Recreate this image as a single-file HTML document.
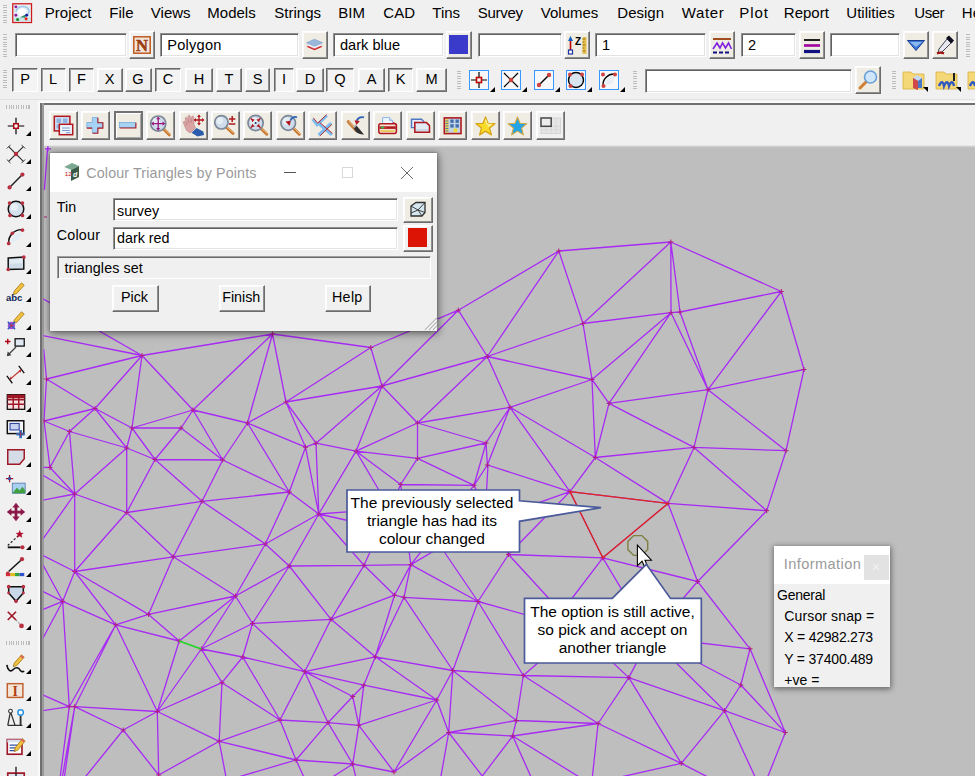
<!DOCTYPE html>
<html lang="en">
<head>
<meta charset="utf-8">
<title>Colour Triangles by Points</title>
<style>
html,body{margin:0;padding:0;}
body{width:975px;height:776px;overflow:hidden;position:relative;background:#f0f0f0;font-family:"Liberation Sans",sans-serif;font-size:15px;color:#000;}
.a{position:absolute;}
.t{position:absolute;white-space:nowrap;line-height:1;}
.mi{position:absolute;top:4px;margin-left:-.2px;font-size:15px;line-height:18px;white-space:nowrap;color:#000;}
.fld{position:absolute;box-sizing:border-box;background:#fff;border:1px solid;border-color:#909090 #fff #fff #909090;box-shadow:inset 1px 1px 0 #606060, inset -1px -1px 0 #e3e3e3;}
.btn{position:absolute;box-sizing:border-box;background:#f0f0f0;border:1px solid;border-color:#fff #6c6c6c #6c6c6c #fff;box-shadow:inset -1px -1px 0 #8e8e8e, inset 1px 1px 0 #fbfbfb;}
.btn.c{background:#efede3;}
.prs{position:absolute;box-sizing:border-box;background:#f4f4f4;border:1px solid;border-color:#696969 #fff #fff #696969;box-shadow:inset 1px 1px 0 #a0a0a0;}
.lb{position:absolute;top:68px;height:24px;font-size:14.6px;line-height:21px;text-align:center;}
.grip{position:absolute;width:4px;background:repeating-linear-gradient(to bottom,#bcbcbc 0,#bcbcbc 1px,transparent 1px,transparent 2.5px);}
.gripv{position:absolute;height:4px;background:repeating-linear-gradient(to right,#bcbcbc 0,#bcbcbc 1px,transparent 1px,transparent 2.5px);}
.tri{position:absolute;width:0;height:0;border-left:5px solid transparent;border-bottom:5px solid #000;}
svg{position:absolute;left:0;top:0;overflow:visible;}
.m{fill:none;stroke:#a82af5;stroke-width:1.3;}
.x{fill:none;stroke:#b0207a;stroke-width:1;}
</style>
</head>
<body>
<!-- menu bar -->
<div class="grip" style="left:3px;top:5px;height:18px"></div>
<svg width="20.300" height="20.300" style="left:12.300px;top:2.700px" viewBox="0 0 21 21"><rect x=".8" y=".8" width="19.400" height="19.400" fill="#e4eef6" stroke="#d01818" stroke-width="1.300"/><path d="M4 9c1-5 7-7 12-4 2 2 2 5 0 7" fill="none" stroke="#9cc4e4" stroke-width="1.600"/><path d="M6 8l5-3 4 3-2 5-5 1z" fill="#fff"/><path d="M8 15l6-3 0 3.500z" fill="#2c8c5c"/><rect x="2" y="15" width="17" height="4" fill="#b8e0e0" opacity=".7"/><circle cx="4" cy="4" r="1.500" fill="#8c1c9c"/><circle cx="4" cy="12.600" r="1.500" fill="#8c1c9c"/><circle cx="15.200" cy="12.600" r="1.500" fill="#18189c"/><circle cx="5.800" cy="17" r="1.600" fill="#1c8c2c"/><path d="M14.600 14.500l1.800 1.900-1.800 1.900-1.800-1.900z" fill="#f01818"/></svg>
<span class="mi" style="left:45px">Project</span>
<span class="mi" style="left:109.5px">File</span>
<span class="mi" style="left:151px">Views</span>
<span class="mi" style="left:207.5px">Models</span>
<span class="mi" style="left:274.5px">Strings</span>
<span class="mi" style="left:338.5px">BIM</span>
<span class="mi" style="left:383.5px">CAD</span>
<span class="mi" style="left:432.5px">Tins</span>
<span class="mi" style="left:478px;letter-spacing:-.3px">Survey</span>
<span class="mi" style="left:541px">Volumes</span>
<span class="mi" style="left:617.5px">Design</span>
<span class="mi" style="left:682px;letter-spacing:.6px">Water</span>
<span class="mi" style="left:739.5px;letter-spacing:.9px">Plot</span>
<span class="mi" style="left:784px">Report</span>
<span class="mi" style="left:846.5px">Utilities</span>
<span class="mi" style="left:914.5px;letter-spacing:-.5px">User</span>
<span class="mi" style="left:962px">Help</span>
<!-- toolbar row 1 -->
<div class="grip" style="left:3px;top:34px;height:23px"></div>
<div class="fld" style="left:15px;top:33px;width:112px;height:24px"></div>
<div class="btn" style="left:129px;top:31px;width:26px;height:28px"></div>
<svg width="18" height="18" style="left:133px;top:36px" viewBox="0 0 18 18"><rect x="0.8" y="0.8" width="16.4" height="16.4" fill="#f2e6dc" stroke="#c05a20" stroke-width="1.5"/><text x="9" y="15" text-anchor="middle" font-family="Liberation Serif,serif" font-weight="bold" font-size="16.500" fill="#9a3c10" stroke="#9a3c10" stroke-width=".5">N</text></svg>
<div class="fld" style="left:160px;top:33px;width:139px;height:24px"></div>
<span class="t" style="left:167.2px;top:38.1px;font-size:14.6px;letter-spacing:.25px">Polygon</span>
<div class="btn c" style="left:302px;top:31px;width:26px;height:28px"></div>
<svg width="19" height="16" style="left:305px;top:37px" viewBox="0 0 20 18"><path d="M1 11l9-4 9 4-9 4z" fill="#d02020"/><path d="M1 9l9-4 9 4-9 4z" fill="#f4f4f8" stroke="#c8c8d8" stroke-width=".5"/><path d="M1 6.5l9-4 9 4-9 4z" fill="#9ab8dc" stroke="#6a90c0" stroke-width=".6"/></svg>
<div class="fld" style="left:333px;top:33px;width:111px;height:24px"></div>
<span class="t" style="left:340px;top:38.1px;font-size:14.6px">dark blue</span>
<div class="btn c" style="left:446px;top:31px;width:26px;height:28px"></div>
<div class="a" style="left:449px;top:35px;width:19px;height:19px;background:#3a3acb"></div>
<div class="fld" style="left:478px;top:33px;width:84px;height:24px"></div>
<div class="btn c" style="left:564px;top:31px;width:26px;height:28px"></div>
<svg width="22" height="22" style="left:566px;top:34px" viewBox="0 0 22 22"><path d="M4.5 18V5" stroke="#c00000" stroke-width="1.6"/><path d="M2 7l2.5-5 2.500 5z" fill="#1060c0"/><rect x="2.500" y="16" width="4" height="4" fill="#fff" stroke="#2030a0" stroke-width="1.2"/><text x="9" y="11" font-family="Liberation Sans,sans-serif" font-weight="bold" font-size="10" fill="#000">Z</text><rect x="16.500" y="3" width="4" height="17" fill="#e8c050"/><path d="M16.500 5h3M16.500 8h2M16.500 11h3M16.500 14h2M16.500 17h3" stroke="#806000" stroke-width=".8"/></svg>
<div class="fld" style="left:595px;top:33px;width:111px;height:24px"></div>
<span class="t" style="left:602px;top:38.1px;font-size:14.6px">1</span>
<div class="btn c" style="left:709px;top:31px;width:26px;height:28px"></div>
<svg width="20" height="18" style="left:712px;top:37px" viewBox="0 0 20 18"><path d="M1 2h18" stroke="#a05020" stroke-width="2"/><path d="M1 12l4-6 3 5 2.500-5 3 5 3-5 3 6" fill="none" stroke="#8020e0" stroke-width="1.6"/><path d="M1 15.500h18" stroke="#101080" stroke-width="2" stroke-dasharray="4 2"/></svg>
<div class="fld" style="left:741px;top:33px;width:55px;height:24px"></div>
<span class="t" style="left:748px;top:38.1px;font-size:14.6px">2</span>
<div class="btn c" style="left:799px;top:31px;width:26px;height:28px"></div>
<svg width="18" height="18" style="left:803px;top:37px" viewBox="0 0 18 18"><path d="M1 3h16" stroke="#202020" stroke-width="2"/><path d="M1 8.500h16" stroke="#a000a0" stroke-width="2.600"/><path d="M1 14.500h16" stroke="#101080" stroke-width="3.200"/></svg>
<div class="fld" style="left:830px;top:33px;width:70px;height:24px"></div>
<div class="btn c" style="left:903px;top:31px;width:26px;height:28px"></div>
<svg width="20" height="14" style="left:906px;top:39px" viewBox="0 0 20 14"><path d="M1.500 1.500h17l-8.500 10z" fill="#3a78d8" stroke="#1a3a90" stroke-width="1"/><path d="M4 3h12l-6 5z" fill="#8ab8f0"/></svg>
<div class="btn c" style="left:932px;top:31px;width:26px;height:28px"></div>
<svg width="20" height="20" style="left:935px;top:35px" viewBox="0 0 20 20"><path d="M12 4l4 4-9 9-4 1 1-4z" fill="#e8e8f0" stroke="#404050" stroke-width="1"/><path d="M11 3l3-2.500 5 5-2.500 3z" fill="#101020"/><path d="M2 18.500c2-1 5-1 7 0" stroke="#a01010" stroke-width="2" fill="none"/></svg>
<div class="grip" style="left:966px;top:34px;height:23px"></div>
<!-- toolbar row 2 -->
<div class="grip" style="left:3px;top:70px;height:20px"></div>
<div class="prs lb" style="left:12px;width:26px">P</div>
<div class="prs lb" style="left:40.500px;width:25px">L</div>
<div class="prs lb" style="left:69px;width:25px">F</div>
<div class="btn lb" style="left:96.500px;width:26px">X</div>
<div class="btn lb" style="left:124.500px;width:27px">G</div>
<div class="prs lb" style="left:155px;width:26px">C</div>
<div class="btn lb" style="left:185px;width:28px">H</div>
<div class="btn lb" style="left:216px;width:26px">T</div>
<div class="btn lb" style="left:245px;width:25px">S</div>
<div class="prs lb" style="left:274px;width:20px">I</div>
<div class="btn lb" style="left:296px;width:28px">D</div>
<div class="prs lb" style="left:326px;width:28px">Q</div>
<div class="btn lb" style="left:358px;width:27px">A</div>
<div class="prs lb" style="left:388px;width:25px">K</div>
<div class="btn lb" style="left:416px;width:31px">M</div>
<div class="grip" style="left:457px;top:71px;height:18px"></div>
<!-- snap icons -->
<div class="a" style="left:469px;top:70px;width:20px;height:20px;box-sizing:border-box;border:1px solid #3399ff;background:#f7f7f7"></div>
<svg width="20" height="20" style="left:469px;top:70px" viewBox="0 0 20 20"><path d="M10 2v16M2 10h16" stroke="#000" stroke-width="1.2"/><rect x="7.500" y="7.500" width="5" height="5" fill="#fff" stroke="#c00000" stroke-width="1.600"/></svg>
<div class="tri" style="left:490px;top:87px"></div>
<div class="a" style="left:501px;top:70px;width:20px;height:20px;box-sizing:border-box;border:1px solid #3399ff;background:#f7f7f7"></div>
<svg width="20" height="20" style="left:501px;top:70px" viewBox="0 0 20 20"><path d="M3 3l14 14M17 3L3 17" stroke="#000" stroke-width="1.200"/><circle cx="10" cy="10" r="2.200" fill="#d04040"/></svg>
<div class="tri" style="left:522px;top:87px"></div>
<div class="a" style="left:534px;top:70px;width:20px;height:20px;box-sizing:border-box;border:1px solid #3399ff;background:#f7f7f7"></div>
<svg width="20" height="20" style="left:534px;top:70px" viewBox="0 0 20 20"><path d="M5 15L15 5" stroke="#000" stroke-width="1.400"/><circle cx="5" cy="15" r="2.200" fill="#d04040"/><circle cx="15" cy="5" r="2.200" fill="#d04040"/></svg>
<div class="tri" style="left:555px;top:87px"></div>
<div class="a" style="left:566px;top:70px;width:20px;height:20px;box-sizing:border-box;border:1px solid #3399ff;background:#f7f7f7"></div>
<svg width="20" height="20" style="left:566px;top:70px" viewBox="0 0 20 20"><circle cx="10" cy="10" r="7.500" fill="#d8e4f0" stroke="#000" stroke-width="1.400"/><circle cx="4" cy="4.500" r="2" fill="#d04040"/><circle cx="16" cy="4.500" r="2" fill="#d04040"/><circle cx="4.500" cy="16" r="2" fill="#d04040"/></svg>
<div class="tri" style="left:587px;top:87px"></div>
<div class="a" style="left:599px;top:70px;width:20px;height:20px;box-sizing:border-box;border:1px solid #3399ff;background:#f7f7f7"></div>
<svg width="20" height="20" style="left:599px;top:70px" viewBox="0 0 20 20"><path d="M4 16A11 11 0 0 1 16 4" fill="none" stroke="#000" stroke-width="1.400"/><path d="M6 16A9 9 0 0 1 16 6l-3 8z" fill="#e8eef4"/><circle cx="4" cy="4.500" r="2" fill="#d04040"/><circle cx="16" cy="4.500" r="2" fill="#d04040"/><circle cx="4.500" cy="16" r="2" fill="#d04040"/></svg>
<div class="tri" style="left:620px;top:87px"></div>
<div class="grip" style="left:633px;top:71px;height:18px"></div>
<div class="fld" style="left:645px;top:68.500px;width:207px;height:24.500px"></div>
<div class="btn c" style="left:855px;top:66px;width:26px;height:28px"></div>
<svg width="22" height="22" style="left:857px;top:69px" viewBox="0 0 22 22"><path d="M3 19l7-7" stroke="#d08030" stroke-width="3" stroke-linecap="round"/><circle cx="13.500" cy="8" r="6" fill="#cfe6fa" stroke="#6aa0d8" stroke-width="1.600"/></svg>
<div class="grip" style="left:892px;top:71px;height:18px"></div>
<svg width="26" height="24" style="left:902px;top:68px" viewBox="0 0 26 24"><path d="M1 4h8l2 2h11v15H1z" fill="#f4d878" stroke="#d8b040" stroke-width=".8"/><rect x="11" y="10" width="9" height="10" fill="#4878c8"/><path d="M11 10l4-3 5 3-4 3z" fill="#c8d8f0"/><path d="M11 10v10l5 2V13z" fill="#d04848"/><path d="M21 19h5v5z" fill="#000"/></svg>
<svg width="26" height="24" style="left:935px;top:68px" viewBox="0 0 26 24"><path d="M1 4h8l2 2h11v15H1z" fill="#f4d878" stroke="#d8b040" stroke-width=".8"/><path d="M4 18c2-5 4-5 5 0 2-5 4-5 5 0 2-5 4-5 5 0" fill="none" stroke="#3058c0" stroke-width="2.400"/><path d="M19 5v8" stroke="#202020" stroke-width="2"/><path d="M21 19h5v5z" fill="#000"/></svg>
<svg width="10" height="24" style="left:967px;top:68px" viewBox="0 0 10 24"><path d="M1 4h8v17H1z" fill="#f4d878" stroke="#d8b040" stroke-width=".8"/><path d="M3 18c2-5 4-5 5 0" fill="none" stroke="#3058c0" stroke-width="2.400"/></svg>
<!-- view frame + toolbar -->
<div class="a" style="left:0;top:99px;width:975px;height:1px;background:#e2e2e2"></div>
<div class="a" style="left:38px;top:101px;width:937px;height:2px;background:#fafafa"></div>
<div class="a" style="left:38px;top:101px;width:2px;height:675px;background:#fafafa"></div>
<div class="a" style="left:40px;top:103px;width:935px;height:2px;background:#707070"></div>
<div class="a" style="left:40px;top:103px;width:3.500px;height:673px;background:linear-gradient(to right,#707070 0,#707070 2.400px,#9a9a9a 2.400px)"></div>
<div class="btn c" style="left:48.5px;top:110.500px;width:29px;height:29.500px"></div>
<svg width="29" height="30" style="left:48.5px;top:110.500px" viewBox="0 0 29 30"><rect x="5.300" y="5.300" width="15.600" height="14.600" fill="#cfe0f4" stroke="#b01820" stroke-width="1.500"/><rect x="7.500" y="7.500" width="4.500" height="4.500" fill="#8fb4e0"/><rect x="14" y="7.500" width="4.500" height="4.500" fill="#8fb4e0"/><rect x="7.500" y="13.500" width="3" height="4" fill="#8fb4e0"/><rect x="10.300" y="13.300" width="13.400" height="10.400" fill="#eef4fc" stroke="#b01820" stroke-width="1.500"/><path d="M13 17h8M13 19.500h8M17 21.700h4.500" stroke="#7c9cd0" stroke-width="1"/></svg>
<div class="btn c" style="left:81.0px;top:110.500px;width:29px;height:29.500px"></div>
<svg width="29" height="30" style="left:81.0px;top:110.500px" viewBox="0 0 29 30"><path d="M11.300 6.500h5.300v5h5v5.300h-5v5.200h-5.300v-5.200h-5.500v-5.300h5.500z" fill="#a6d2f4" stroke="#5c9cd8" stroke-width=".6"/><path d="M16.900 6.800v4.900h5v5.400h-5v5.200h-5.300M5.800 17.100h5.300" fill="none" stroke="#b01820" stroke-width="1.100"/></svg>
<div class="btn c" style="left:113.5px;top:110.500px;width:29px;height:29.500px;border:2px solid #727272;box-shadow:inset 1px 1px 0 #fff, inset -1px -1px 0 #a8a8a8"></div>
<svg width="29" height="30" style="left:113.5px;top:110.500px" viewBox="0 0 29 30"><rect x="5.600" y="11.500" width="16" height="5.200" fill="#a6d2f4" stroke="#5c9cd8" stroke-width=".6"/><path d="M21.900 11.700v5.300H5.800" fill="none" stroke="#b01820" stroke-width="1.100"/></svg>
<div class="btn c" style="left:146.0px;top:110.500px;width:29px;height:29.500px"></div>
<svg width="29" height="30" style="left:146.0px;top:110.500px" viewBox="0 0 29 30"><path d="M17.52 17.919999999999998L23.3 23.8" stroke="#c87830" stroke-width="3" stroke-linecap="round"/><path d="M18.02 17.619999999999997L23.6 23.2" stroke="#f0c080" stroke-width="1" stroke-linecap="round"/><circle cx="12.2" cy="12.6" r="7.6" fill="#cfdcec" stroke="#7c8898" stroke-width="1.700"/><circle cx="10.299999999999999" cy="10.7" r="3.8" fill="#eef4fa" opacity=".7"/><path d="M12.200 7v11.200M6.600 12.600h11.200" stroke="#98187c" stroke-width="1.300"/><path d="M12.200 5.500l2.100 2.700h-4.200zM12.200 19.700l2.100-2.700h-4.200zM5.100 12.600l2.700-2.100v4.200zM19.300 12.600l-2.700-2.100v4.200z" fill="#98187c"/></svg>
<div class="btn c" style="left:178.5px;top:110.500px;width:29px;height:29.500px"></div>
<svg width="29" height="30" style="left:178.5px;top:110.500px" viewBox="0 0 29 30"><path d="M4.500 12c-.5-2 1.200-2.600 2-1l1.600 3-1.800-6c-.5-1.800 1.400-2.400 2-.8l1.700 5-1-6.400c-.2-1.700 1.800-2 2.200-.3l1.200 6.200.2-5.400c0-1.600 2-1.600 2.100 0l.3 7.500 1.500 3-5.500 5.200-3.500-2.700z" fill="#dba4a4" stroke="#b87c80" stroke-width=".6"/><path d="M12.500 21.800l5-4.800 6.800 3.500.7 3.500-6.500 1.500z" fill="#2c5cac"/><path d="M20 4.500v9M15.500 9h9" stroke="#b01820" stroke-width="1.300"/><path d="M20 3.600l1.900 2.400h-3.800zM20 14.400l1.900-2.400h-3.800zM14.600 9l2.400-1.900v3.800zM25.400 9l-2.400-1.900v3.800z" fill="#b01820"/></svg>
<div class="btn c" style="left:211.0px;top:110.500px;width:29px;height:29.500px"></div>
<svg width="29" height="30" style="left:211.0px;top:110.500px" viewBox="0 0 29 30"><path d="M15.09 15.99L22 22.4" stroke="#c87830" stroke-width="3" stroke-linecap="round"/><path d="M15.59 15.69L22.3 21.799999999999997" stroke="#f0c080" stroke-width="1" stroke-linecap="round"/><circle cx="10.4" cy="11.3" r="6.7" fill="#cfdcec" stroke="#7c8898" stroke-width="1.700"/><circle cx="8.725" cy="9.625" r="3.35" fill="#eef4fa" opacity=".7"/><path d="M21.200 5v6M18 8h6.400M18 13h6.400" stroke="#b01820" stroke-width="1.500"/></svg>
<div class="btn c" style="left:243.0px;top:110.500px;width:29px;height:29.500px"></div>
<svg width="29" height="30" style="left:243.0px;top:110.500px" viewBox="0 0 29 30"><path d="M17.919999999999998 17.32L23.8 23.2" stroke="#c87830" stroke-width="3" stroke-linecap="round"/><path d="M18.419999999999998 17.02L24.1 22.599999999999998" stroke="#f0c080" stroke-width="1" stroke-linecap="round"/><circle cx="12.6" cy="12" r="7.6" fill="#cfdcec" stroke="#7c8898" stroke-width="1.700"/><circle cx="10.7" cy="10.1" r="3.8" fill="#eef4fa" opacity=".7"/><g fill="#b01820"><path d="M8.500 8l3.300.6-2.700 2.700zM16.700 8l-.6 3.300-2.700-2.700zM8.500 16l.6-3.300 2.700 2.700zM16.700 16l-3.300-.6 2.700-2.700z"/></g><path d="M7.700 7.200l2.500 2.500M17.500 7.200L15 9.700M7.700 16.800l2.500-2.500M17.500 16.800L15 14.300" stroke="#b01820" stroke-width="1.300"/><circle cx="12.600" cy="12" r="1" fill="#203060"/></svg>
<div class="btn c" style="left:275.5px;top:110.500px;width:29px;height:29.500px"></div>
<svg width="29" height="30" style="left:275.5px;top:110.500px" viewBox="0 0 29 30"><path d="M17.31 17.11L23.3 23.2" stroke="#c87830" stroke-width="3" stroke-linecap="round"/><path d="M17.81 16.81L23.6 22.599999999999998" stroke="#f0c080" stroke-width="1" stroke-linecap="round"/><circle cx="12.2" cy="12" r="7.3" fill="#cfdcec" stroke="#7c8898" stroke-width="1.700"/><circle cx="10.375" cy="10.175" r="3.65" fill="#eef4fa" opacity=".7"/><path d="M9.500 10.500l5.500-1-1.500 5.500z" fill="#b01820"/><path d="M14.500 9.500c1-3 4-4.500 6.500-3" fill="none" stroke="#2c64b8" stroke-width="1.800"/></svg>
<div class="btn c" style="left:308.0px;top:110.500px;width:29px;height:29.500px"></div>
<svg width="29" height="30" style="left:308.0px;top:110.500px" viewBox="0 0 29 30"><path d="M4.500 8.200l4.600 5.800 10-9.400" fill="none" stroke="#7cbcf0" stroke-width="2.600"/><path d="M5.300 6.800l4.300 5.400 9-8.600" fill="none" stroke="#b01820" stroke-width=".9"/><path d="M10.500 12.600l13.300 11.400M23.100 12L10.500 24" stroke="#7cbcf0" stroke-width="2.800"/><path d="M11.600 11.400l12.800 11M24 13.300L11.800 25" stroke="#b01820" stroke-width=".9" fill="none"/></svg>
<div class="btn c" style="left:340.5px;top:110.500px;width:29px;height:29.500px"></div>
<svg width="29" height="30" style="left:340.5px;top:110.500px" viewBox="0 0 29 30"><path d="M7.300 10.600l7.400 8.400" stroke="#c88040" stroke-width="3.200" stroke-linecap="round"/><path d="M8 10.200l6.800 7.800" stroke="#f0c890" stroke-width=".9"/><path d="M12.800 17.300l2.900-2.500 7.300 8.700c-3 .3-6-.8-8-2.500z" fill="#303030"/><path d="M13 16.200l2.300-2" stroke="#a0a8b0" stroke-width="1.600"/><path d="M23 6.400c-3-.8-6 .6-7.300 3.200" fill="none" stroke="#2c64b8" stroke-width="1.900"/><path d="M13.600 9.200l5.200.7-3.400 4z" fill="#b01820"/></svg>
<div class="btn c" style="left:373.0px;top:110.500px;width:29px;height:29.500px"></div>
<svg width="29" height="30" style="left:373.0px;top:110.500px" viewBox="0 0 29 30"><path d="M9.600 6.600h7l3 3v5h-10z" fill="#eef6fe" stroke="#8cb4e4" stroke-width="1"/><path d="M16.600 6.600v3h3" fill="#c0d8f4" stroke="#8cb4e4" stroke-width=".8"/><rect x="5.800" y="12.800" width="17.600" height="9.600" rx="1.800" fill="#f4e4d4" stroke="#b01820" stroke-width="1.500"/><path d="M20 11.500l3.400 1.800v6" fill="none" stroke="#b01820" stroke-width="1.300"/><rect x="6.500" y="15.300" width="16.200" height="2.600" fill="#b01820"/><rect x="7.500" y="19.300" width="14" height="1.500" fill="#e8c040"/><rect x="7.800" y="15.700" width="3.400" height="1.700" fill="#30c050"/><rect x="11.800" y="15.900" width="1.500" height="1.300" fill="#e04040"/></svg>
<div class="btn c" style="left:405.5px;top:110.500px;width:29px;height:29.500px"></div>
<svg width="29" height="30" style="left:405.5px;top:110.500px" viewBox="0 0 29 30"><path d="M5.500 8.300h10l2.300 2.300v6H5.500z" fill="#e4ecf8" stroke="#4c78c4" stroke-width="1.400"/><path d="M8.800 11.600h11.700l3 3v6.700H8.800z" fill="#ccd8e4" stroke="#b01820" stroke-width="1.500"/><path d="M10 12.800h10l2.300 2.300v3H10z" fill="#eef2f6" opacity=".7"/></svg>
<div class="btn c" style="left:438.0px;top:110.500px;width:29px;height:29.500px"></div>
<svg width="29" height="30" style="left:438.0px;top:110.500px" viewBox="0 0 29 30"><rect x="6.300" y="6.900" width="16.700" height="15.700" fill="#c4d4e4" stroke="#b01820" stroke-width="1.600"/><rect x="7.400" y="8" width="3" height="13.500" fill="#e8d050"/><path d="M7.400 10h3M7.400 12.500h3M7.400 15h3M7.400 17.500h3M7.400 20h3" stroke="#5070a0" stroke-width=".9"/><g fill="#4470b0"><rect x="12.300" y="8.500" width="3.400" height="3.400"/><rect x="17.500" y="8.500" width="3.400" height="3.400"/><rect x="12.300" y="13.200" width="3.400" height="3.400"/><rect x="17.500" y="13.200" width="3.400" height="3.400"/></g><rect x="15.600" y="17.600" width="3.600" height="3.600" fill="#f0dc30"/></svg>
<div class="btn c" style="left:470.5px;top:110.500px;width:29px;height:29.500px"></div>
<svg width="29" height="30" style="left:470.5px;top:110.500px" viewBox="0 0 29 30"><path d="M14.500 6l2.500 6.300 6.900.4-5.300 4.400 1.800 6.800-5.900-3.800-5.900 3.800 1.800-6.800-5.300-4.400 6.900-.4z" fill="#f8dc28" stroke="#d8a418" stroke-width="1.300" stroke-linejoin="round"/><path d="M14.500 8.500l1.600 4.600 4 .2-3.500 2.700" fill="none" stroke="#fdf4a0" stroke-width="1.200"/></svg>
<div class="btn c" style="left:503.0px;top:110.500px;width:29px;height:29.500px"></div>
<svg width="29" height="30" style="left:503.0px;top:110.500px" viewBox="0 0 29 30"><path d="M14.500 6l2.500 6.300 6.900.4-5.300 4.400 1.800 6.800-5.900-3.800-5.900 3.800 1.800-6.800-5.300-4.400 6.900-.4z" fill="#22a4e6" stroke="#d8a840" stroke-width="1.100" stroke-linejoin="round"/></svg>
<div class="btn" style="left:535.5px;top:110.500px;width:29px;height:29.500px"></div>
<svg width="29" height="30" style="left:535.5px;top:110.500px" viewBox="0 0 29 30"><rect x="5" y="7" width="19.500" height="15.600" fill="#e6e6e6" stroke="#d0d0d0" stroke-width=".8"/><path d="M15.200 7v15.600M5 15.300h19.500M19.800 7v15.600M5 19h19.500M10 15.300v7.300" stroke="#d4d4d4" stroke-width=".8"/><rect x="5" y="7" width="10.200" height="8.300" fill="#ececec" stroke="#484848" stroke-width="1.500"/></svg>
<!-- left tool bar -->
<div class="gripv" style="left:6px;top:104.5px;width:24px"></div>
<div class="gripv" style="left:6px;top:641px;width:24px"></div>
<svg width="22" height="22" style="left:4.5px;top:115px" viewBox="0 0 24 24"><path d="M12 3v18M3 12h18" stroke="#000" stroke-width="1.300"/><rect x="9.500" y="9.500" width="5" height="5" fill="#fff" stroke="#b00010" stroke-width="1.600"/></svg>
<div class="tri" style="left:26px;top:131px"></div>
<svg width="22" height="22" style="left:4.5px;top:143px" viewBox="0 0 24 24"><path d="M4 4l16 16M20 4L4 20" stroke="#303030" stroke-width="1.300"/><path d="M2 6l4-4M18 22l4-4M18 2l4 4M2 18l4 4" stroke="#303030" stroke-width="1"/><circle cx="12" cy="12" r="2.4" fill="#b83040"/></svg>
<div class="tri" style="left:26px;top:159px"></div>
<svg width="22" height="22" style="left:4.5px;top:170px" viewBox="0 0 24 24"><path d="M5 19L19 5" stroke="#202020" stroke-width="1.600"/><circle cx="5" cy="19" r="2.3" fill="#b83040"/><circle cx="19" cy="5" r="2.3" fill="#b83040"/></svg>
<div class="tri" style="left:26px;top:186px"></div>
<svg width="22" height="22" style="left:4.5px;top:198px" viewBox="0 0 24 24"><circle cx="12" cy="12" r="8.500" fill="#d4e0ec" stroke="#101010" stroke-width="1.600"/><circle cx="10" cy="10" r="4" fill="#f0f4f8" opacity=".7"/><circle cx="5" cy="5.5" r="2" fill="#b83040"/><circle cx="19" cy="5.5" r="2" fill="#b83040"/><circle cx="5.5" cy="19" r="2" fill="#b83040"/><circle cx="19" cy="19" r="2" fill="#b83040"/></svg>
<div class="tri" style="left:26px;top:214px"></div>
<svg width="22" height="22" style="left:4.5px;top:226px" viewBox="0 0 24 24"><path d="M4 19A14 14 0 0 1 19 4" fill="none" stroke="#101010" stroke-width="1.600"/><path d="M7 19A12 12 0 0 1 19 7l-4 8z" fill="#e4ecf4"/><circle cx="4" cy="19" r="2" fill="#b83040"/><circle cx="8" cy="8" r="2" fill="#b83040"/><circle cx="19" cy="4.5" r="2" fill="#b83040"/></svg>
<div class="tri" style="left:26px;top:242px"></div>
<svg width="22" height="22" style="left:4.5px;top:253px" viewBox="0 0 24 24"><path d="M3.500 5.500l17-1v13l-17 .5z" fill="#cfdce8" stroke="#101010" stroke-width="1.600"/><path d="M5 7l14-.8v5l-14 .4z" fill="#eef4f8" opacity=".6"/><circle cx="3.500" cy="18" r="2" fill="#b83040"/><circle cx="20.500" cy="4.500" r="2" fill="#b83040"/></svg>
<div class="tri" style="left:26px;top:269px"></div>
<svg width="22" height="22" style="left:4.5px;top:281px" viewBox="0 0 24 24"><path d="M10 11l8-9 3 2.500-8 9-4 1.500z" fill="#f0c040" stroke="#a07010" stroke-width=".8"/><text x="1" y="22" font-family="Liberation Sans,sans-serif" font-size="10.500" font-weight="bold" fill="#102858">abc</text></svg>
<div class="tri" style="left:26px;top:297px"></div>
<svg width="22" height="22" style="left:4.5px;top:309px" viewBox="0 0 24 24"><path d="M10 12l8-9 3 2.500-8 9-4 1.500z" fill="#f0c040" stroke="#a07010" stroke-width=".8"/><circle cx="7" cy="18" r="4" fill="#a050d0"/><path d="M3 14l8 8M11 14l-8 8" stroke="#3060c0" stroke-width="1.600"/><circle cx="7" cy="18" r="1.400" fill="#d03040"/></svg>
<div class="tri" style="left:26px;top:325px"></div>
<svg width="22" height="22" style="left:4.5px;top:336px" viewBox="0 0 24 24"><path d="M3 3v6M0 6h6" stroke="#b00010" stroke-width="1.500"/><rect x="11" y="3" width="10" height="8" fill="#e0e8f4" stroke="#101010" stroke-width="1.400"/><path d="M12 12L3 21" stroke="#404040" stroke-width="1.400"/><path d="M2 22l1-5 4 4z" fill="#404040"/></svg>
<div class="tri" style="left:26px;top:352px"></div>
<svg width="22" height="22" style="left:4.5px;top:364px" viewBox="0 0 24 24"><path d="M5 17L18 6" stroke="#c03030" stroke-width="1.300"/><path d="M2 13l6 8M15 2l6 8" stroke="#101010" stroke-width="1.400"/><path d="M5 17l1-3.500 2 2.500zM18 6l-1 3.500-2-2.500z" fill="#c03030"/></svg>
<div class="tri" style="left:26px;top:380px"></div>
<svg width="22" height="22" style="left:4.5px;top:391px" viewBox="0 0 24 24"><rect x="2.500" y="4" width="19" height="16" fill="#f4e0e0" stroke="#101010" stroke-width="1.400"/><path d="M2.500 9.500h19M2.500 14.500h19M9 4v16M15 4v16" stroke="#a01828" stroke-width="1.600"/><rect x="2.500" y="4" width="19" height="4" fill="#a01828"/></svg>
<div class="tri" style="left:26px;top:407px"></div>
<svg width="22" height="22" style="left:4.5px;top:418px" viewBox="0 0 24 24"><rect x="2.500" y="3" width="18" height="14" fill="#f4f4f8" stroke="#101010" stroke-width="1.600"/><rect x="5.500" y="6" width="10" height="7" fill="#c8d4f0" stroke="#3048a0" stroke-width="1.200"/><path d="M17 13v9M12.500 17.500h9" stroke="#2878d0" stroke-width="3"/><path d="M17 14v7M13.500 17.500h7" stroke="#b02030" stroke-width=".8"/></svg>
<div class="tri" style="left:26px;top:434px"></div>
<svg width="22" height="22" style="left:4.5px;top:446px" viewBox="0 0 24 24"><path d="M3 4h18v10l-5 6H3z" fill="#d4dce8" stroke="#a01828" stroke-width="1.600"/></svg>
<div class="tri" style="left:26px;top:462px"></div>
<svg width="22" height="22" style="left:4.5px;top:474px" viewBox="0 0 24 24"><path d="M5 1v8M1 5h8" stroke="#a01030" stroke-width="1.400"/><rect x="3.500" y="3.500" width="3" height="3" fill="#3050a0"/><rect x="8" y="10" width="14" height="11" fill="#a8d0f0" stroke="#6080b0" stroke-width="1"/><path d="M8 21l5-6 3 3 3-4 3 4v3z" fill="#40a040"/></svg>
<div class="tri" style="left:26px;top:490px"></div>
<svg width="22" height="22" style="left:4.5px;top:501px" viewBox="0 0 24 24"><path d="M12 2l4 5h-2.500v3.500H17V8l5 4-5 4v-2.500h-3.500V17H16l-4 5-4-5h2.500v-3.500H7V16l-5-4 5-4v2.500h3.500V7H8z" fill="#8a1848"/></svg>
<div class="tri" style="left:26px;top:517px"></div>
<svg width="22" height="22" style="left:4.5px;top:529px" viewBox="0 0 24 24"><path d="M3 18L17 5" stroke="#202020" stroke-width="1.300" stroke-dasharray="2.500 2"/><path d="M16 1l1.200 3 3.200.300-2.400 2 .8 3.200-2.800-1.700-2.800 1.700.8-3.200-2.400-2 3.200-.300z" fill="#b01030"/><path d="M3 20h14" stroke="#101010" stroke-width="2"/><circle cx="19" cy="20" r="2.3" fill="#b83040"/></svg>
<div class="tri" style="left:26px;top:545px"></div>
<svg width="22" height="22" style="left:4.5px;top:556px" viewBox="0 0 24 24"><path d="M4 17L18 4" stroke="#101010" stroke-width="1.600"/><circle cx="18.5" cy="3.5" r="2.3" fill="#b83040"/><rect x="1" y="18.500" width="5" height="3.500" fill="#e03030"/><rect x="6" y="18.500" width="5" height="3.500" fill="#e0c020"/><rect x="11" y="18.500" width="5" height="3.500" fill="#30a040"/><rect x="16" y="18.500" width="5" height="3.500" fill="#3050d0"/><circle cx="3" cy="19" r="2" fill="#c03040"/></svg>
<div class="tri" style="left:26px;top:572px"></div>
<svg width="22" height="22" style="left:4.5px;top:583px" viewBox="0 0 24 24"><path d="M4 4h16v7l-8 9-8-9z" fill="#c8d8e8" stroke="#101010" stroke-width="1.600"/><circle cx="4" cy="4" r="2" fill="#b83040"/><circle cx="20" cy="4" r="2" fill="#b83040"/><circle cx="12" cy="20" r="2" fill="#b83040"/><circle cx="4" cy="11" r="1.6" fill="#b83040"/><circle cx="20" cy="11" r="1.6" fill="#b83040"/></svg>
<div class="tri" style="left:26px;top:599px"></div>
<svg width="22" height="22" style="left:4.5px;top:609px" viewBox="0 0 24 24"><path d="M3 3l9 9M12 3l-9 9" stroke="#a01828" stroke-width="1.800"/><path d="M12 12l6 6" stroke="#909090" stroke-width="1.200" stroke-dasharray="2 1.500"/><circle cx="18" cy="18.5" r="2.6" fill="#b83040"/></svg>
<div class="tri" style="left:26px;top:625px"></div>
<svg width="22" height="22" style="left:4.5px;top:653px" viewBox="0 0 24 24"><path d="M10 11l8-9 3 2.500-8 9-4 1.500z" fill="#f0c040" stroke="#a07010" stroke-width=".8"/><path d="M17 3l3 2.500" stroke="#e06060" stroke-width="2"/><path d="M2 13c1 6 4 8 7 5s6-2 7 0 3 3 5 2" fill="none" stroke="#101010" stroke-width="1.800"/></svg>
<div class="tri" style="left:26px;top:669px"></div>
<svg width="22" height="22" style="left:4.5px;top:680px" viewBox="0 0 24 24"><rect x="2.500" y="4" width="17" height="15" fill="#f4e4d8" stroke="#c06030" stroke-width="1.600"/><text x="11" y="17" text-anchor="middle" font-family="Liberation Serif,serif" font-size="15" font-weight="bold" fill="#b04010">I</text></svg>
<div class="tri" style="left:26px;top:696px"></div>
<svg width="22" height="22" style="left:4.5px;top:707px" viewBox="0 0 24 24"><path d="M6 5L3 20M6 5l5 15M3 20h16" stroke="#303030" stroke-width="1.400" fill="none"/><circle cx="6" cy="4.500" r="2" fill="#fff" stroke="#303030" stroke-width="1.200"/><path d="M17 9v11" stroke="#303030" stroke-width="2"/><circle cx="17" cy="6" r="3" fill="#fff" stroke="#2890e0" stroke-width="1.600"/></svg>
<div class="tri" style="left:26px;top:723px"></div>
<svg width="22" height="22" style="left:4.5px;top:735px" viewBox="0 0 24 24"><rect x="2.500" y="5" width="16" height="16" fill="#fff" stroke="#a01828" stroke-width="1.800"/><rect x="2.500" y="5" width="16" height="3" fill="#d8e0f0"/><path d="M5 11h9M5 14h9M5 17h7" stroke="#3050a0" stroke-width="1.200"/><path d="M11 14l8-10 3 2.500-8 10-4 1.500z" fill="#f0c040" stroke="#a07010" stroke-width=".8"/><path d="M18 5l3 2.500" stroke="#e06060" stroke-width="2"/></svg>
<div class="tri" style="left:26px;top:751px"></div>
<svg width="22" height="22" style="left:4.5px;top:764px" viewBox="0 0 24 24"><path d="M12 3v8" stroke="#101010" stroke-width="1.400"/><path d="M3 10h18v10H3z" fill="#d8e4f0" stroke="#a01828" stroke-width="1.800"/><path d="M12 10v10" stroke="#101010" stroke-width="1.400"/></svg>
<!-- drawing canvas -->
<div class="a" style="left:43.500px;top:147px;width:931.500px;height:629px;background:#bebebe"></div>
<div class="a" style="left:43.500px;top:145px;width:931.500px;height:3px;background:linear-gradient(to bottom,#f0f0f0,#c8c8c8 60%,#bebebe)"></div>
<svg width="975" height="776" viewBox="0 0 975 776">
<defs><clipPath id="cv"><rect x="43.500" y="146" width="931.500" height="630"/></clipPath></defs>
<g clip-path="url(#cv)">
<path class="m" d="M142 355.5L272.5 334M142 355.5L46.5 379M142 355.5L95 408.5M142 355.5L193 410M142 355.5L132 428M272.5 334L193 410M272.5 334L286 402M272.5 334L247.5 423M272.5 334L370.8 347.5M46.5 379L95 408.5M46.5 379L44 421M95 408.5L132 428M95 408.5L69.5 431.5M95 408.5L126.7 448M95 408.5L44 421M193 410L132 428M193 410L181 428M193 410L247.5 423M193 410L222.7 460M286 402L247.5 423M286 402L370.8 347.5M286 402L382 386M286 402L316 443.2M286 402L305.5 447.2M132 428L181 428M132 428L126.7 448M132 428L155 459.5M181 428L155 459.5M181 428L222.7 460M247.5 423L222.7 460M247.5 423L289.3 492M247.5 423L305.5 447.2M69.5 431.5L126.7 448M69.5 431.5L50 467.5M69.5 431.5L74.7 494M69.5 431.5L44 421M126.7 448L155 459.5M126.7 448L74.7 494M126.7 448L126.7 512.5M155 459.5L222.7 460M155 459.5L126.7 512.5M155 459.5L202 501.3M222.7 460L289.3 492M222.7 460L202 501.3M50 467.5L74.7 494M50 467.5L44 421M74.7 494L126.7 512.5M74.7 494L74.7 571.5M289.3 492L305.5 447.2M289.3 492L318.8 514M289.3 492L202 501.3M289.3 492L265.3 544M458.3 310.2L370.8 347.5M458.3 310.2L487.3 356.5M458.3 310.2L382 386M458.3 310.2L558.8 251M370.8 347.5L382 386M487.3 356.5L382 386M487.3 356.5L510 407.3M487.3 356.5L417.5 423M487.3 356.5L583 323.5M487.3 356.5L592 379.5M487.3 356.5L558.8 251M382 386L417.5 423M382 386L316 443.2M382 386L356 451.2M510 407.3L417.5 423M510 407.3L486 443M510 407.3L487.4 465M510 407.3L592 379.5M510 407.3L595.3 457.5M510 407.3L570 491.6M417.5 423L486 443M417.5 423L356 451.2M417.5 423L417.5 458.4M486 443L417.5 458.4M486 443L487.4 465M316 443.2L305.5 447.2M316 443.2L356 451.2M316 443.2L318.8 514M305.5 447.2L318.8 514M356 451.2L417.5 458.4M356 451.2L400.7 484.5M356 451.2L318.8 514M417.5 458.4L400.7 484.5M417.5 458.4L474 485.3M487.4 465L474 485.3M487.4 465L570 491.6M400.7 484.5L474 485.3M400.7 484.5L364 565.3M400.7 484.5L410.8 564.6M474 485.3L410.8 564.6M474 485.3L508.5 554.5M583 323.5L671 312.7M583 323.5L592 379.5M583 323.5L558.8 251M583 323.5L670.8 242M671 312.7L680 312M671 312.7L592 379.5M671 312.7L708 389.7M671 312.7L609 403.4M671 312.7L670.8 242M680 312L708 389.7M680 312L670.8 242M680 312L781.3 291.5M592 379.5L609 403.4M592 379.5L595.3 457.5M708 389.7L609 403.4M708 389.7L694 447.4M708 389.7L786 450.7M708 389.7L781.3 291.5M708 389.7L804 369.5M609 403.4L694 447.4M609 403.4L595.3 457.5M694 447.4L786 450.7M694 447.4L595.3 457.5M694 447.4L668 503.4M694 447.4L766.7 510.7M786 450.7L804 369.5M786 450.7L766.7 510.7M595.3 457.5L570 491.6M595.3 457.5L668 503.4M570 491.6L668 503.4M570 491.6L602.8 557.8M570 491.6L508.5 554.5M558.8 251L670.8 242M670.8 242L781.3 291.5M781.3 291.5L804 369.5M668 503.4L766.7 510.7M668 503.4L602.8 557.8M668 503.4L697.6 581.5M766.7 510.7L697.6 581.5M602.8 557.8L697.6 581.5M602.8 557.8L508.5 554.5M602.8 557.8L650 637M697.6 581.5L750 648.8M697.6 581.5L650 637M750 648.8L740.8 685M750 648.8L785.3 732.5M750 648.8L650 637M628.8 677.6L724.5 710.7M628.8 677.6L598.1 723.5M628.8 677.6L681.3 763.4M628.8 677.6L650 637M628.8 677.6L577 629M740.8 685L724.5 710.7M740.8 685L785.3 732.5M740.8 685L650 637M724.5 710.7L785.3 732.5M724.5 710.7L681.3 763.4M724.5 710.7L650 637M598.1 723.5L523.3 675.5M598.1 723.5L516.3 720.5M598.1 723.5L512.7 736M598.1 723.5L681.3 763.4M318.8 514L364 565.3M318.8 514L265.3 544M318.8 514L289.3 566M364 565.3L410.8 564.6M364 565.3L394.5 595.2M364 565.3L331 619.3M364 565.3L289.3 566M410.8 564.6L394.5 595.2M410.8 564.6L404 597.3M410.8 564.6L478 601.5M394.5 595.2L404 597.3M394.5 595.2L331 619.3M394.5 595.2L375.3 656.8M404 597.3L478 601.5M404 597.3L375.3 656.8M404 597.3L452.8 670.5M478 601.5L452.8 670.5M478 601.5L523.3 675.5M478 601.5L508.5 554.5M478 601.5L577 629M331 619.3L375.3 656.8M331 619.3L304.7 671.7M331 619.3L289.3 566M331 619.3L252.5 623.5M375.3 656.8L452.8 670.5M375.3 656.8L304.7 671.7M375.3 656.8L436.7 700M375.3 656.8L363.8 685.2M452.8 670.5L523.3 675.5M452.8 670.5L436.7 700M452.8 670.5L448.7 732.5M452.8 670.5L516.3 720.5M304.7 671.7L252.5 623.5M304.7 671.7L242.7 657M304.7 671.7L280 720M304.7 671.7L352.7 696.5M304.7 671.7L328 722.7M304.7 671.7L363.8 685.2M523.3 675.5L516.3 720.5M523.3 675.5L577 629M508.5 554.5L577 629M126.7 512.5L202 501.3M126.7 512.5L173.3 556.8M126.7 512.5L74.7 571.5M202 501.3L265.3 544M202 501.3L173.3 556.8M265.3 544L173.3 556.8M265.3 544L289.3 566M265.3 544L235.5 596M173.3 556.8L74.7 571.5M173.3 556.8L235.5 596M173.3 556.8L148.5 614.4M74.7 571.5L62.7 601.3M74.7 571.5L148.5 614.4M74.7 571.5L115.7 624.8M289.3 566L235.5 596M289.3 566L252.5 623.5M235.5 596L252.5 623.5M235.5 596L179.2 641M235.5 596L201.3 649M62.7 601.3L115.7 624.8M62.7 601.3L69.3 706.7M148.5 614.4L115.7 624.8M148.5 614.4L179.2 641M252.5 623.5L201.3 649M252.5 623.5L242.7 657M115.7 624.8L179.2 641M115.7 624.8L69.3 706.7M115.7 624.8L74.7 706.7M115.7 624.8L157.3 711.5M179.2 641L201.3 649M179.2 641L157.3 711.5M201.3 649L242.7 657M201.3 649L222 682.7M201.3 649L157.3 711.5M242.7 657L222 682.7M242.7 657L280 720M222 682.7L157.3 711.5M222 682.7L219.2 741.3M222 682.7L280 720M69.3 706.7L74.7 706.7M74.7 706.7L157.3 711.5M74.7 706.7L123.2 730M157.3 711.5L123.2 730M157.3 711.5L219.2 741.3M157.3 711.5L158.7 775M123.2 730L158.7 775M219.2 741.3L280 720M219.2 741.3L296 760M219.2 741.3L158.7 775M280 720L296 760M280 720L328 722.7M296 760L328 722.7M296 760L352.7 764M352.7 696.5L328 722.7M352.7 696.5L358.8 725.3M352.7 696.5L363.8 685.2M436.7 700L358.8 725.3M436.7 700L448.7 732.5M436.7 700L394 772M436.7 700L363.8 685.2M328 722.7L358.8 725.3M328 722.7L352.7 764M358.8 725.3L352.7 764M358.8 725.3L394 772M358.8 725.3L363.8 685.2M448.7 732.5L516.3 720.5M448.7 732.5L512.7 736M448.7 732.5L394 772M516.3 720.5L512.7 736M352.7 764L394 772M650 637L577 629M628.8 677.6L523.3 675.5M235.5 596L148.5 614.4M486 443L474 485.3M142 355.5L32.6 333.6M142 355.5L34 293.6M46.5 379L43.7 349.1M74.7 494L32.1 502.3M74.7 494L33.6 469.7M74.7 494L37 547.5M74.7 571.5L33.2 550.6M50 467.5L32.3 467.2M62.7 601.3L38.3 556.1M62.7 601.3L33.3 586.7M62.7 601.3L32.9 613.6M62.7 601.3L38.6 646.3M69.3 706.7L33.3 690.7M69.3 706.7L32.4 712.3M69.3 706.7L58.8 787.9M74.7 706.7L60.4 787.8M74.7 706.7L62.8 787.9M123.2 730L78.5 785.3M219.2 741.3L228 787.8M296 760L230 779.4M296 760L308.4 786.9M352.7 764L323.9 782.5M352.7 764L358.2 787.7M448.7 732.5L438.9 787.8M448.7 732.5L489.6 785.5M512.7 736L475 785.6M512.7 736L535.5 787M512.7 736L587.9 782.3M598.1 723.5L591.2 787.9M681.3 763.4L613.3 778.6M681.3 763.4L716.7 781.5M724.5 710.7L759.7 786.9M785.3 732.5L763.6 787.2M47.6 147.7L44.4 190M488 464.9L486.3 495M356 451.2L380 492M570 491.6L515 511M602.8 557.8L565 607.5M478 601.5L443 550M410.8 564.6L437 549.3M318.8 514L350 511.6M318.8 514L350 521"/>
<path class="x" d="M139.5 355.5h5M142 353v5M270 334h5M272.5 331.5v5M44 379h5M46.5 376.5v5M92.5 408.5h5M95 406v5M190.5 410h5M193 407.5v5M283.5 402h5M286 399.5v5M129.5 428h5M132 425.5v5M178.5 428h5M181 425.5v5M245 423h5M247.5 420.5v5M67 431.5h5M69.5 429v5M124.2 448h5M126.7 445.5v5M152.5 459.5h5M155 457v5M220.2 460h5M222.7 457.5v5M47.5 467.5h5M50 465v5M72.2 494h5M74.7 491.5v5M286.8 492h5M289.3 489.5v5M455.8 310.2h5M458.3 307.7v5M368.3 347.5h5M370.8 345v5M484.8 356.5h5M487.3 354v5M379.5 386h5M382 383.5v5M507.5 407.3h5M510 404.8v5M415 423h5M417.5 420.5v5M483.5 443h5M486 440.5v5M313.5 443.2h5M316 440.7v5M303 447.2h5M305.5 444.7v5M353.5 451.2h5M356 448.7v5M415 458.4h5M417.5 455.9v5M484.9 465h5M487.4 462.5v5M398.2 484.5h5M400.7 482v5M471.5 485.3h5M474 482.8v5M580.5 323.5h5M583 321v5M668.5 312.7h5M671 310.2v5M677.5 312h5M680 309.5v5M589.5 379.5h5M592 377v5M705.5 389.7h5M708 387.2v5M606.5 403.4h5M609 400.9v5M691.5 447.4h5M694 444.9v5M783.5 450.7h5M786 448.2v5M592.8 457.5h5M595.3 455v5M567.5 491.6h5M570 489.1v5M556.3 251h5M558.8 248.5v5M668.3 242h5M670.8 239.5v5M778.8 291.5h5M781.3 289v5M801.5 369.5h5M804 367v5M665.5 503.4h5M668 500.9v5M764.2 510.7h5M766.7 508.2v5M600.3 557.8h5M602.8 555.3v5M695.1 581.5h5M697.6 579v5M747.5 648.8h5M750 646.3v5M626.3 677.6h5M628.8 675.1v5M738.3 685h5M740.8 682.5v5M722 710.7h5M724.5 708.2v5M782.8 732.5h5M785.3 730v5M595.6 723.5h5M598.1 721v5M316.3 514h5M318.8 511.5v5M361.5 565.3h5M364 562.8v5M408.3 564.6h5M410.8 562.1v5M392 595.2h5M394.5 592.7v5M401.5 597.3h5M404 594.8v5M475.5 601.5h5M478 599v5M328.5 619.3h5M331 616.8v5M372.8 656.8h5M375.3 654.3v5M450.3 670.5h5M452.8 668v5M302.2 671.7h5M304.7 669.2v5M520.8 675.5h5M523.3 673v5M506 554.5h5M508.5 552v5M124.2 512.5h5M126.7 510v5M199.5 501.3h5M202 498.8v5M262.8 544h5M265.3 541.5v5M170.8 556.8h5M173.3 554.3v5M72.2 571.5h5M74.7 569v5M286.8 566h5M289.3 563.5v5M233 596h5M235.5 593.5v5M60.2 601.3h5M62.7 598.8v5M146 614.4h5M148.5 611.9v5M250 623.5h5M252.5 621v5M113.2 624.8h5M115.7 622.3v5M176.7 641h5M179.2 638.5v5M198.8 649h5M201.3 646.5v5M240.2 657h5M242.7 654.5v5M219.5 682.7h5M222 680.2v5M66.8 706.7h5M69.3 704.2v5M72.2 706.7h5M74.7 704.2v5M154.8 711.5h5M157.3 709v5M120.7 730h5M123.2 727.5v5M216.7 741.3h5M219.2 738.8v5M277.5 720h5M280 717.5v5M293.5 760h5M296 757.5v5M156.2 775h5M158.7 772.5v5M350.2 696.5h5M352.7 694v5M434.2 700h5M436.7 697.5v5M325.5 722.7h5M328 720.2v5M356.3 725.3h5M358.8 722.8v5M446.2 732.5h5M448.7 730v5M513.8 720.5h5M516.3 718v5M510.2 736h5M512.7 733.5v5M350.2 764h5M352.7 761.5v5M391.5 772h5M394 769.5v5M678.8 763.4h5M681.3 760.9v5M41.5 421h5M44 418.5v5M361.3 685.2h5M363.8 682.7v5"/>
<path d="M570 491.600L668 503.400L602.800 557.800Z" fill="none" stroke="#e02818" stroke-width="1.300"/>
<path d="M179.200 641l22.100 8" fill="none" stroke="#20e020" stroke-width="1.600"/>
<path d="M47.900 146v5.500M45 148.800h6" stroke="#a428f0" stroke-width="1.200" fill="none"/>
<path d="M44 217h3" stroke="#b0207a" stroke-width="1" fill="none"/>
<path d="M647.7 549.6L641.9 555.4L633.7 555.4L627.9 549.6L627.9 541.4L633.7 535.6L641.9 535.6L647.7 541.4Z" fill="none" stroke="#7f7f45" stroke-width="1.400"/>
</g>
<!-- mouse cursor -->
<path d="M637.400 545.200v20.500l4.700-4.500 3.300 7.500 2.700-1.200-3.100-7.300h6.400z" fill="#fff" stroke="#000" stroke-width="1.100" stroke-linejoin="miter"/>
<!-- callout 1 -->
<path d="M347 490H519.500V500.800L601 507.700L519.500 521.300V552H347Z" fill="#fff" stroke="#4a5a9a" stroke-width="1.700" stroke-linejoin="miter"/>
<!-- callout 2 -->
<path d="M524.500 598.400H612.300L646.300 564.300L670.500 598.400H701.300V663H524.500Z" fill="#fff" stroke="#4a5a9a" stroke-width="1.700" stroke-linejoin="miter"/>
<g font-family="Liberation Sans,sans-serif" font-size="15.500" fill="#000" text-anchor="middle">
<text x="432" y="507.600">The previously selected</text>
<text x="432" y="525.600">triangle has had its</text>
<text x="432" y="543.600">colour changed</text>
<text x="612.500" y="616.600">The option is still active,</text>
<text x="612.500" y="634.600">so pick and accept on</text>
<text x="612.500" y="652.600">another triangle</text>
</g>
</svg>
<!-- dialog: Colour Triangles by Points -->
<div class="a" style="left:50.3px;top:153.4px;width:387px;height:178px;background:#f0f0f0;box-shadow:0 0 0 .6px rgba(60,60,60,.28), 0 1px 6px 1px rgba(0,0,0,.34), 2px 3px 9px rgba(0,0,0,.22)"></div>
<div class="a" style="left:50.3px;top:153.4px;width:387px;height:38.4px;background:#fff"></div>
<svg width="18" height="20" style="left:62px;top:162px" viewBox="0 0 18 20"><path d="M2 5l8-4 7 3-8 4z" fill="#7aa890"/><path d="M2 5l7 3v11l-7-4z" fill="#f8f8f8"/><path d="M9 8l8-4v11l-8 4z" fill="#3a5a48"/><text x="2.800" y="13.500" font-family="Liberation Sans,sans-serif" font-size="6.200" fill="#d01020">12</text><text x="11" y="14.500" font-family="Liberation Sans,sans-serif" font-size="7" fill="#fff" font-weight="bold" font-style="italic">d</text></svg>
<span class="t" style="left:86.3px;top:165.5px;font-size:14.3px;letter-spacing:.13px;color:#9a9a9a">Colour Triangles by Points</span>
<div class="a" style="left:284px;top:172px;width:12px;height:1px;background:#555"></div>
<div class="a" style="left:342px;top:167px;width:11px;height:11px;box-sizing:border-box;border:1px solid #d8d8d8"></div>
<svg width="14" height="14" style="left:400px;top:166px" viewBox="0 0 14 14"><path d="M1 1l12 12M13 1L1 13" stroke="#5a5a5a" stroke-width=".9"/></svg>
<span class="t" style="left:56.8px;top:199.5px;font-size:14.3px">Tin</span>
<div class="fld" style="left:113px;top:198px;width:285px;height:23px"></div>
<span class="t" style="left:117px;top:203.6px;font-size:14.3px">survey</span>
<div class="btn c" style="left:403px;top:197px;width:30px;height:26px"></div>
<svg width="18" height="16" style="left:409px;top:201px" viewBox="0 0 18 16"><path d="M2 5l5-3.500h9v10L13 15H2z" fill="#d4e6ee" stroke="#303030" stroke-width="1.300"/><path d="M2 5l7 4 7-7.500M9 9l4 6M9 9l-7 3M9 9l7 2.500" stroke="#303030" stroke-width=".9" fill="none"/></svg>
<span class="t" style="left:56.8px;top:227.9px;font-size:14.3px;letter-spacing:.2px">Colour</span>
<div class="fld" style="left:113px;top:227px;width:285px;height:23px"></div>
<span class="t" style="left:117px;top:231.3px;font-size:14.3px">dark red</span>
<div class="btn" style="left:403px;top:225px;width:30px;height:27px"></div>
<div class="a" style="left:408px;top:228px;width:19px;height:19px;background:#dc1405"></div>
<div class="a" style="left:57px;top:256px;width:374px;height:23px;box-sizing:border-box;border:1px solid;border-color:#a0a0a0 #fff #fff #a0a0a0;box-shadow:inset 1px 1px 0 #696969;background:#f0f0f0"></div>
<span class="t" style="left:64.5px;top:260.7px;font-size:14.3px;letter-spacing:.1px">triangles set</span>
<div class="btn" style="left:112px;top:285px;width:47px;height:27px"></div>
<span class="t" style="left:121px;top:290.1px;font-size:14.3px">Pick</span>
<div class="btn" style="left:219px;top:285px;width:46px;height:27px"></div>
<span class="t" style="left:222.2px;top:290.1px;font-size:14.3px">Finish</span>
<div class="btn" style="left:325px;top:285px;width:46px;height:27px"></div>
<span class="t" style="left:332px;top:290.1px;font-size:14.3px;letter-spacing:.3px">Help</span>
<svg width="14" height="14" style="left:424px;top:317px" viewBox="0 0 14 14"><path d="M1 13L13 1M5 13l8-8M9 13l4-4" stroke="#b8b8b8" stroke-width="1.400"/><path d="M2.500 13L13 2.500M6.500 13L13 6.500M10.500 13l2.500-2.500" stroke="#fff" stroke-width="1"/></svg>
<!-- Information panel -->
<div class="a" style="left:774px;top:546px;width:116px;height:141px;background:#f0f0f0;box-shadow:0 1px 5px 1px rgba(0,0,0,.3), 1px 2px 7px rgba(0,0,0,.2);overflow:hidden">
<div class="a" style="left:0;top:0;width:116px;height:38px;background:#fff"></div>
<span class="t" style="left:9.8px;top:11.4px;font-size:14.6px;letter-spacing:.4px;color:#9a9a9a">Information</span>
<div class="a" style="left:90px;top:9px;width:25px;height:25px;background:#e2e2e2"></div>
<span class="t" style="left:98px;top:14px;font-size:14px;color:#f2f2f2">×</span>
<span class="t" style="left:3px;top:41.5px;font-size:14px;letter-spacing:-.25px">General</span>
<span class="t" style="left:10.3px;top:63px;font-size:14px;letter-spacing:.13px">Cursor snap =</span>
<span class="t" style="left:10.3px;top:84.3px;font-size:14px;letter-spacing:-.23px">X = 42982.273</span>
<span class="t" style="left:10.3px;top:105.8px;font-size:14px;letter-spacing:-.2px">Y = 37400.489</span>
<span class="t" style="left:10.3px;top:127px;font-size:14px">+ve =</span>
</div>
</body>
</html>
